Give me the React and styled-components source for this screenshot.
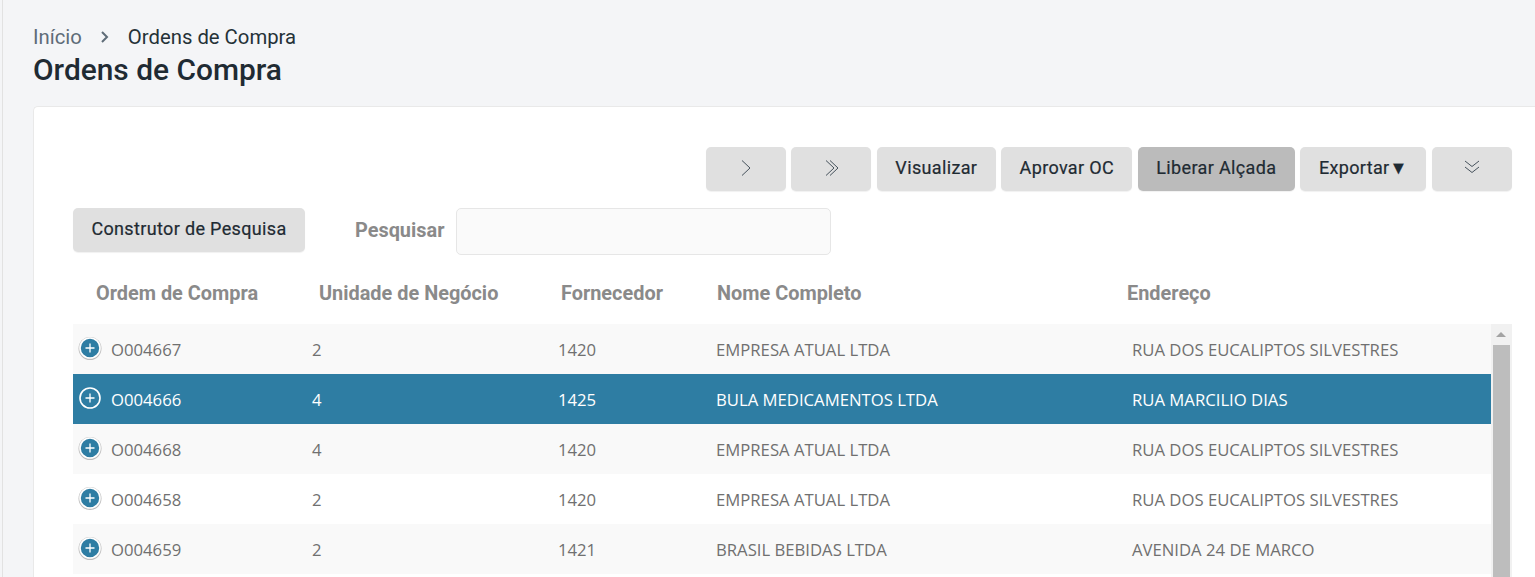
import React from "react";
import styled, { createGlobalStyle } from "styled-components";

const Global = createGlobalStyle`
  html, body { margin: 0; padding: 0; height: 100%; overflow: hidden; background: #f4f5f7; }
  body { font-family: Roboto, "Liberation Sans", sans-serif; color: #253238; }
  * { box-sizing: border-box; }
`;

const Page = styled.div`
  height: 577px;
  overflow: hidden;
  margin-left: 2px;
  border-left: 1px solid #e2e2e2;
  padding: 24px 0 0 30px;
  background: #f4f5f7;
`;
const Breadcrumb = styled.nav`
  display: flex;
  align-items: center;
  height: 26px;
  font-size: 20.3px;
  color: #253238;
`;
const Crumb = styled.span`
  color: ${p => (p.$muted ? "#5e6c78" : "#253238")};
`;
const Separator = styled.svg`
  width: 10px;
  height: 14px;
  margin: 0 18px 0 18px;
`;
const Title = styled.h1`
  margin: 0;
  font-size: 29.9px;
  line-height: 38px;
  padding-top: 1px;
  font-weight: 500;
  color: #1f2b33;
`;
const Card = styled.section`
  margin-top: 17px;
  height: 500px;
  background: #fff;
  border: 1px solid #e9e9e9;
  border-right: 0;
  border-radius: 5px 0 0 0;
  padding: 40px 23.2px 0 39px;
`;
const Toolbar = styled.div`
  display: flex;
  justify-content: flex-end;
  gap: 5.5px;
`;
const Button = styled.button`
  height: 44px;
  width: ${p => p.$width}px;
  padding: 0 0 2px;
  border: 0;
  border-radius: 5px;
  background: ${p => (p.$active ? "#bbbbbb" : "#e0e0e0")};
  box-shadow: 0 1px 1px rgba(0,0,0,.06);
  font: 400 18px/1 Roboto, sans-serif;
  letter-spacing: .35px;
  color: #1f2b33;
  -webkit-text-stroke: .2px #1f2b33;
  display: flex;
  align-items: center;
  justify-content: center;
  flex: none;
`;
const Icon = styled.svg`
  width: 18px;
  height: 18px;
  fill: none;
  stroke: #46525c;
  stroke-width: 1;
`;
const SearchBar = styled.div`
  display: flex;
  align-items: flex-start;
  margin-top: 17px;
`;
const SearchLabel = styled.label`
  align-self: center;
  margin: -2px 0 0 50px;
  width: 101px;
  font-size: 19.9px;
  font-weight: 700;
  color: #8a8a8a;
`;
const SearchInput = styled.input`
  width: 375px;
  height: 47px;
  border: 1px solid #e6e6e6;
  border-radius: 5px;
  background: #fafafa;
`;
const Head = styled.div`
  display: grid;
  grid-template-columns: 223px 242px 156px 410px 1fr;
  padding: 8px 0 0 23px;
  height: 69px;
  align-items: center;
  font-size: 19.9px;
  font-weight: 700;
  color: #8a8a8a;
`;
const TableBody = styled.div`
  display: flex;
  align-items: stretch;
`;
const Rows = styled.div`
  flex: 1;
  min-width: 0;
`;
const Row = styled.div`
  display: grid;
  grid-template-columns: 234px 246px 158px 416px 1fr;
  height: 50px;
  align-items: center;
  padding-left: 5px;
  background: ${p => (p.$selected ? "#2e7da3" : p.$odd ? "#f9f9f9" : "#fff")};
  color: ${p => (p.$selected ? "#fff" : "#707070")};
  font-family: "Open Sans", sans-serif;
  font-size: 16.7px;
  & > * { padding-top: 1px; }
`;
const FirstCell = styled.div`
  display: flex;
  align-items: center;
  gap: 9px;
`;
const Expander = styled.svg`
  width: 24px;
  height: 24px;
  flex: none;
  margin-top: -4px;
`;
const Scrollbar = styled.div`
  width: 21px;
  flex: none;
  background: #f1f1f1;
  padding: 0 2px;
`;
const ScrollArrow = styled.div`
  height: 21px;
  display: flex;
  align-items: center;
  justify-content: center;
  &::before {
    content: "";
    border-left: 5px solid transparent;
    border-right: 5px solid transparent;
    border-bottom: 5px solid #a3a3a3;
  }
`;
const ScrollThumb = styled.div`
  height: 300px;
  background: #bdbdbd;
`;

const data = [
  ["O004667", "2", "1420", "EMPRESA ATUAL LTDA", "RUA DOS EUCALIPTOS SILVESTRES"],
  ["O004666", "4", "1425", "BULA MEDICAMENTOS LTDA", "RUA MARCILIO DIAS"],
  ["O004668", "4", "1420", "EMPRESA ATUAL LTDA", "RUA DOS EUCALIPTOS SILVESTRES"],
  ["O004658", "2", "1420", "EMPRESA ATUAL LTDA", "RUA DOS EUCALIPTOS SILVESTRES"],
  ["O004659", "2", "1421", "BRASIL BEBIDAS LTDA", "AVENIDA 24 DE MARCO"],
];

const Plus = ({ selected }) => (
  <Expander viewBox="0 0 24 24">
    {!selected && <circle cx="12" cy="12.5" r="11.5" fill="#bdbdbd" />}
    <circle cx="12" cy="12" r="10" fill={selected ? "none" : "#2e7da3"} stroke="#fff" strokeWidth="1.6" />
    <path d="M12 7.5v9M7.5 12h9" stroke="#fff" strokeWidth="1.3" fill="none" />
  </Expander>
);

export default function App() {
  return (
    <>
      <Global />
      <Page>
        <Breadcrumb>
          <Crumb $muted>Início</Crumb>
          <Separator viewBox="0 0 10 14"><path d="M2 2l5 5-5 5" fill="none" stroke="#5e6c78" strokeWidth="2" /></Separator>
          <Crumb>Ordens de Compra</Crumb>
        </Breadcrumb>
        <Title>Ordens de Compra</Title>
        <Card>
          <Toolbar>
            <Button $width={80}><Icon viewBox="0 0 18 18"><path d="M5 1.5l8 7.5-8 7.5" /></Icon></Button>
            <Button $width={80}><Icon viewBox="0 0 18 18"><path d="M4 1.5l8 7.5-8 7.5M8 1.5l8 7.5-8 7.5" /></Icon></Button>
            <Button $width={119}>Visualizar</Button>
            <Button $width={131}>Aprovar OC</Button>
            <Button $width={157} $active>Liberar Alçada</Button>
            <Button $width={126}>Exportar▼</Button>
            <Button $width={80}><Icon viewBox="0 0 18 18"><path d="M2 2l7 5.5 7-5.5M2 8l7 5.5 7-5.5" /></Icon></Button>
          </Toolbar>
          <SearchBar>
            <Button $width={232}>Construtor de Pesquisa</Button>
            <SearchLabel>Pesquisar</SearchLabel>
            <SearchInput />
          </SearchBar>
          <Head>
            <span>Ordem de Compra</span>
            <span>Unidade de Negócio</span>
            <span>Fornecedor</span>
            <span>Nome Completo</span>
            <span>Endereço</span>
          </Head>
          <TableBody>
            <Rows>
              {data.map((r, i) => (
                <Row key={r[0]} $odd={i % 2 === 0} $selected={i === 1}>
                  <FirstCell><Plus selected={i === 1} />{r[0]}</FirstCell>
                  <span>{r[1]}</span>
                  <span>{r[2]}</span>
                  <span>{r[3]}</span>
                  <span>{r[4]}</span>
                </Row>
              ))}
            </Rows>
            <Scrollbar>
              <ScrollArrow />
              <ScrollThumb />
            </Scrollbar>
          </TableBody>
        </Card>
      </Page>
    </>
  );
}
